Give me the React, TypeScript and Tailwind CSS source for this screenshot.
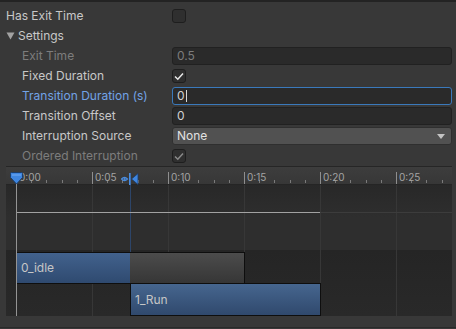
import React from "react";

const majors = [
  { x: 10, label: "0:00" },
  { x: 86, label: "0:05" },
  { x: 162, label: "0:10" },
  { x: 238, label: "0:15" },
  { x: 314, label: "0:20" },
  { x: 390, label: "0:25" },
];

const minors: number[] = [];
for (let i = 0; i < 30; i++) {
  const x = Math.round(10 + i * 15.2);
  if (i % 5 !== 0 && x < 446) minors.push(x);
}

function Check({ dim }: { dim?: boolean }) {
  return (
    <svg width="10" height="9" viewBox="0 0 10 9" fill="none" stroke={dim ? "#8a8a8a" : "#e8e8e8"} strokeWidth="1.5">
      <polyline points="1,4.5 3.8,7.2 9,1.5" />
    </svg>
  );
}

function Toggle({ checked, dim }: { checked?: boolean; dim?: boolean }) {
  return (
    <div className="w-[14px] h-[14px] rounded-[3px] border border-[#1e1e1e] bg-[#2f2f2f] flex items-center justify-center">
      {checked && <Check dim={dim} />}
    </div>
  );
}

function Row({
  label,
  indent,
  tone = "normal",
  children,
}: {
  label: React.ReactNode;
  indent?: boolean;
  tone?: "normal" | "dim" | "focus";
  children?: React.ReactNode;
}) {
  const color =
    tone === "dim" ? "text-[#7d7d7d]" : tone === "focus" ? "text-[#72a3e6]" : "text-[#c8c8c8]";
  return (
    <div className="flex items-center h-5">
      <div className={`w-[172px] shrink-0 ${indent ? "pl-[22px]" : "pl-[6px]"} ${color}`}>{label}</div>
      <div className="flex-1 pr-[4px] flex items-center">{children}</div>
    </div>
  );
}

function Field({ value, tone = "normal", focus }: { value: string; tone?: "normal" | "dim"; focus?: boolean }) {
  return (
    <div
      className={`w-full h-[18px] rounded-[3px] bg-[#2a2a2a] border flex items-center pl-[4px] ${
        focus ? "border-[#3a79bb]" : "border-[#212121]"
      } ${tone === "dim" ? "text-[#7d7d7d]" : "text-[#d2d2d2]"}`}
    >
      {value}
      {focus && <span className="w-px h-[12px] bg-[#d8d8d8] ml-px" />}
    </div>
  );
}

function ShieldMarker() {
  return (
    <svg width="13" height="13" viewBox="0 0 13 13">
      <path d="M1.5 0.5 H11.5 Q12.5 0.5 12.5 1.5 V5.5 L6.5 12 L0.5 5.5 V1.5 Q0.5 0.5 1.5 0.5 Z" fill="#3f86e0" stroke="#1d3e6a" strokeWidth="1" />
      <path d="M2 2 H11 V4 H2 Z" fill="#6aa6f0" opacity="0.6" />
    </svg>
  );
}

function TransitionMarker() {
  return (
    <svg width="18" height="12" viewBox="0 0 18 12" fill="none">
      <path d="M0.5 6 Q3.5 3 6.5 6 Q3.5 9 0.5 6 Z" stroke="#4a8de0" strokeWidth="1.2" />
      <circle cx="3.6" cy="6" r="1" fill="#4a8de0" />
      <rect x="8" y="0" width="1.6" height="12" fill="#4a8de0" />
      <path d="M17 0.5 V11.5 L10.5 6 Z" fill="#3f86e0" stroke="#1d3e6a" strokeWidth="0.8" />
    </svg>
  );
}

function Timeline() {
  return (
    <div className="relative ml-[6px] w-[446px] h-[150px] overflow-hidden border-t border-[#262626] bg-[#2b2b2b]">
      {/* ruler */}
      <div className="relative h-[18px] bg-gradient-to-b from-[#3d3d3d] to-[#373737] border-b border-[#252525]">
        {minors.map((x) => (
          <div key={x} className="absolute bottom-[1px] w-px h-[3px] bg-[#7a7a7a]" style={{ left: x }} />
        ))}
        {majors.map((m) => (
          <div key={m.x} className="absolute top-[5px] h-[12px] flex items-start" style={{ left: m.x }}>
            <div className="w-px h-[12px] bg-[#8e8e8e]" />
            <span className="ml-[2px] -mt-[1px] text-[10px] leading-[12px] text-[#a4a4a4]">{m.label}</span>
          </div>
        ))}
      </div>

      {/* body */}
      <div className="h-[65px] bg-gradient-to-b from-[#282828] via-[#2e2e2e] to-[#2e2e2e]" />
      <div className="h-[66px] bg-gradient-to-b from-[#252525] to-[#292929]" />

      {/* grid lines */}
      {majors.slice(1).map((m) => (
        <div key={m.x} className="absolute top-[18px] bottom-0 w-px bg-[#373737]" style={{ left: m.x }} />
      ))}

      {/* transition line */}
      <div className="absolute left-[124px] top-[6px] bottom-0 w-px bg-[#2d4569]" />

      {/* curve line */}
      <div className="absolute left-[10px] top-[45px] w-[304px] h-px bg-[#a2a2a2]" />
      <div className="absolute left-[314px] top-[45px] right-0 h-px bg-[#3c3c3c]" />

      {/* start line */}
      <div className="absolute left-[10px] top-[15px] bottom-0 w-px bg-[#949494]" />

      {/* bars */}
      <div className="absolute left-[11px] top-[85px] w-[228px] h-[32px] flex border-y border-r border-[#0e0e0e]">
        <div className="w-[113px] h-full bg-gradient-to-b from-[#42628d] to-[#2f4a70] flex items-center pl-[4px] text-[#c6c6c6]">
          0_idle
        </div>
        <div className="flex-1 h-full bg-gradient-to-b from-[#4c4c4c] to-[#363636]" />
      </div>
      <div className="absolute left-[124px] top-[116px] w-[191px] h-[33px] border border-[#0e0e0e] bg-gradient-to-b from-[#46668f] to-[#30496d] flex items-center pl-[4px] text-[#c6c6c6]">
        1_Run
      </div>

      {/* markers */}
      <div className="absolute left-[4px] top-[5px]">
        <ShieldMarker />
      </div>
      <div className="absolute left-[115px] top-[6px]">
        <TransitionMarker />
      </div>
    </div>
  );
}

export default function App() {
  return (
    <div
      className="w-[456px] h-[329px] overflow-hidden bg-[#383838] border-t-2 border-[#232323] text-[12px] leading-[14px]"
      style={{ fontFamily: "Inter, 'Noto Sans', sans-serif" }}
    >
      <div className="pt-[4px]">
        <Row label="Has Exit Time">
          <Toggle />
        </Row>
        <Row
          label={
            <span className="flex items-center">
              <svg width="9" height="8" viewBox="0 0 9 8" className="mr-[3px]">
                <path d="M0.5 0.5 H8.5 L4.5 7.5 Z" fill="#a2a2a2" />
              </svg>
              Settings
            </span>
          }
        />
        <Row label="Exit Time" indent tone="dim">
          <Field value="0.5" tone="dim" />
        </Row>
        <Row label="Fixed Duration" indent>
          <Toggle checked />
        </Row>
        <Row label="Transition Duration (s)" indent tone="focus">
          <Field value="0" focus />
        </Row>
        <Row label="Transition Offset" indent>
          <Field value="0" />
        </Row>
        <Row label="Interruption Source" indent>
          <div className="w-full h-[18px] rounded-[3px] bg-[#515151] border border-[#2f2f2f] flex items-center justify-between pl-[4px] pr-[6px] text-[#e2e2e2]">
            None
            <svg width="8" height="5" viewBox="0 0 8 5">
              <path d="M0 0 H8 L4 5 Z" fill="#c4c4c4" />
            </svg>
          </div>
        </Row>
        <Row label="Ordered Interruption" indent tone="dim">
          <Toggle checked dim />
        </Row>
      </div>
      <Timeline />
      <div className="h-[11px]" />
      <div className="h-px bg-[#2a2a2a]" />
    </div>
  );
}
